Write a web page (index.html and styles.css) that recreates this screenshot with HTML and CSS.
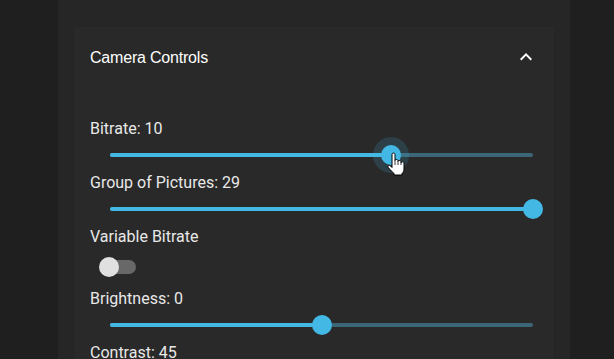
FILE: index.html
```html
<!DOCTYPE html>
<html>
<head>
<meta charset="utf-8">
<link rel="stylesheet" href="styles.css">
</head>
<body>
<div class="panel">
  <div class="card">
    <div class="card-header">
      <span class="title">Camera Controls</span>
      <svg class="chevron" viewBox="0 0 24 24" width="24" height="24"><path d="M12 8l-6 6 1.41 1.41L12 10.83l4.59 4.58L18 14z" fill="#ffffff"/></svg>
    </div>
    <div class="card-body">
      <div class="label">Bitrate: 10</div>
      <div class="slider">
        <div class="rail"></div>
        <div class="track" style="width:66.4%"></div>
        <div class="thumb hover" style="left:66.4%"></div>
      </div>
      <div class="label">Group of Pictures: 29</div>
      <div class="slider">
        <div class="rail"></div>
        <div class="track" style="width:100%"></div>
        <div class="thumb" style="left:100%"></div>
      </div>
      <div class="label">Variable Bitrate</div>
      <div class="switch">
        <div class="switch-track"></div>
        <div class="switch-thumb"></div>
      </div>
      <div class="label">Brightness: 0</div>
      <div class="slider">
        <div class="rail"></div>
        <div class="track" style="width:50%"></div>
        <div class="thumb" style="left:50%"></div>
      </div>
      <div class="label">Contrast: 45</div>
    </div>
  </div>
</div>
<svg class="cursor" viewBox="0 0 18 24" width="18" height="24">
  <path d="M5 2.5C5 1.5 5.7 1 6.5 1S8 1.5 8 2.5V8.5C8 7.8 8.6 7.5 9.5 7.5S11 8 11 8.8V9.5C11 8.8 11.6 8.5 12.5 8.5S14 9 14 9.8V10.8C14 10.1 14.6 9.8 15.5 9.8S17 10.3 17 11V17C17 19 16 20.5 15 21.5V23H7V21.5C6 20.5 4.5 19 3 17.5L1.3 15.5C0.8 14.9 0.9 14 1.5 13.6C2.1 13.2 3 13.3 3.5 13.9L5 15.5Z" fill="#fff" stroke="#000" stroke-width="1" stroke-linejoin="round"/>
  <path d="M8 8.5V13M11 9.5V13M14 10.8V13" stroke="#000" stroke-width="0.8" fill="none"/>
</svg>
</body>
</html>
```

FILE: styles.css
```css
html, body {
  margin: 0;
  padding: 0;
  height: 100%;
  overflow: hidden;
}
body {
  background: #1f1f1f;
  font-family: Roboto, "Liberation Sans", sans-serif;
  position: relative;
}
.panel {
  margin-left: 58px;
  width: 512px;
  height: 100%;
  box-sizing: border-box;
  background: #262626;
  padding: 26px 15px 0;
}
.card {
  background: #292929;
  border: 1px solid #252525;
  border-bottom: none;
  height: 100%;
  box-sizing: border-box;
}
.card-header {
  height: 61px;
  display: flex;
  align-items: center;
  justify-content: space-between;
  padding: 0 16px 0 16px;
}
.title {
  font-family: "Liberation Sans", Arial, sans-serif;
  font-size: 16px;
  color: #ffffff;
  letter-spacing: -0.2px;
}
.chevron {
  display: block;
  margin-top: -2px;
}
.card-body {
  padding: 30px 21px 0 16px;
}
.label {
  font-size: 16px;
  line-height: 20px;
  padding-top: 1px;
  color: #e8e8e8;
}
.slider {
  position: relative;
  height: 33px;
  margin-left: 20px;
}
.rail {
  position: absolute;
  left: 0;
  right: 0;
  top: 14px;
  height: 4px;
  border-radius: 2px;
  background: #3a6678;
}
.track {
  position: absolute;
  left: 0;
  top: 14px;
  height: 4px;
  border-radius: 2px;
  background: #44b8e4;
}
.thumb {
  position: absolute;
  top: 6px;
  width: 20px;
  height: 20px;
  margin-left: -10px;
  border-radius: 50%;
  background: #44b8e4;
}
.thumb.hover {
  box-shadow: 0 0 0 8px rgba(68, 184, 228, 0.16);
}
.switch {
  position: relative;
  height: 41px;
}
.switch-track {
  position: absolute;
  left: 12px;
  top: 13px;
  width: 34px;
  height: 14px;
  border-radius: 7px;
  background: #686868;
}
.switch-thumb {
  position: absolute;
  left: 9px;
  top: 10px;
  width: 20px;
  height: 20px;
  border-radius: 50%;
  background: #e0e0e0;
}
.cursor {
  position: absolute;
  left: 387px;
  top: 152px;
}
```
